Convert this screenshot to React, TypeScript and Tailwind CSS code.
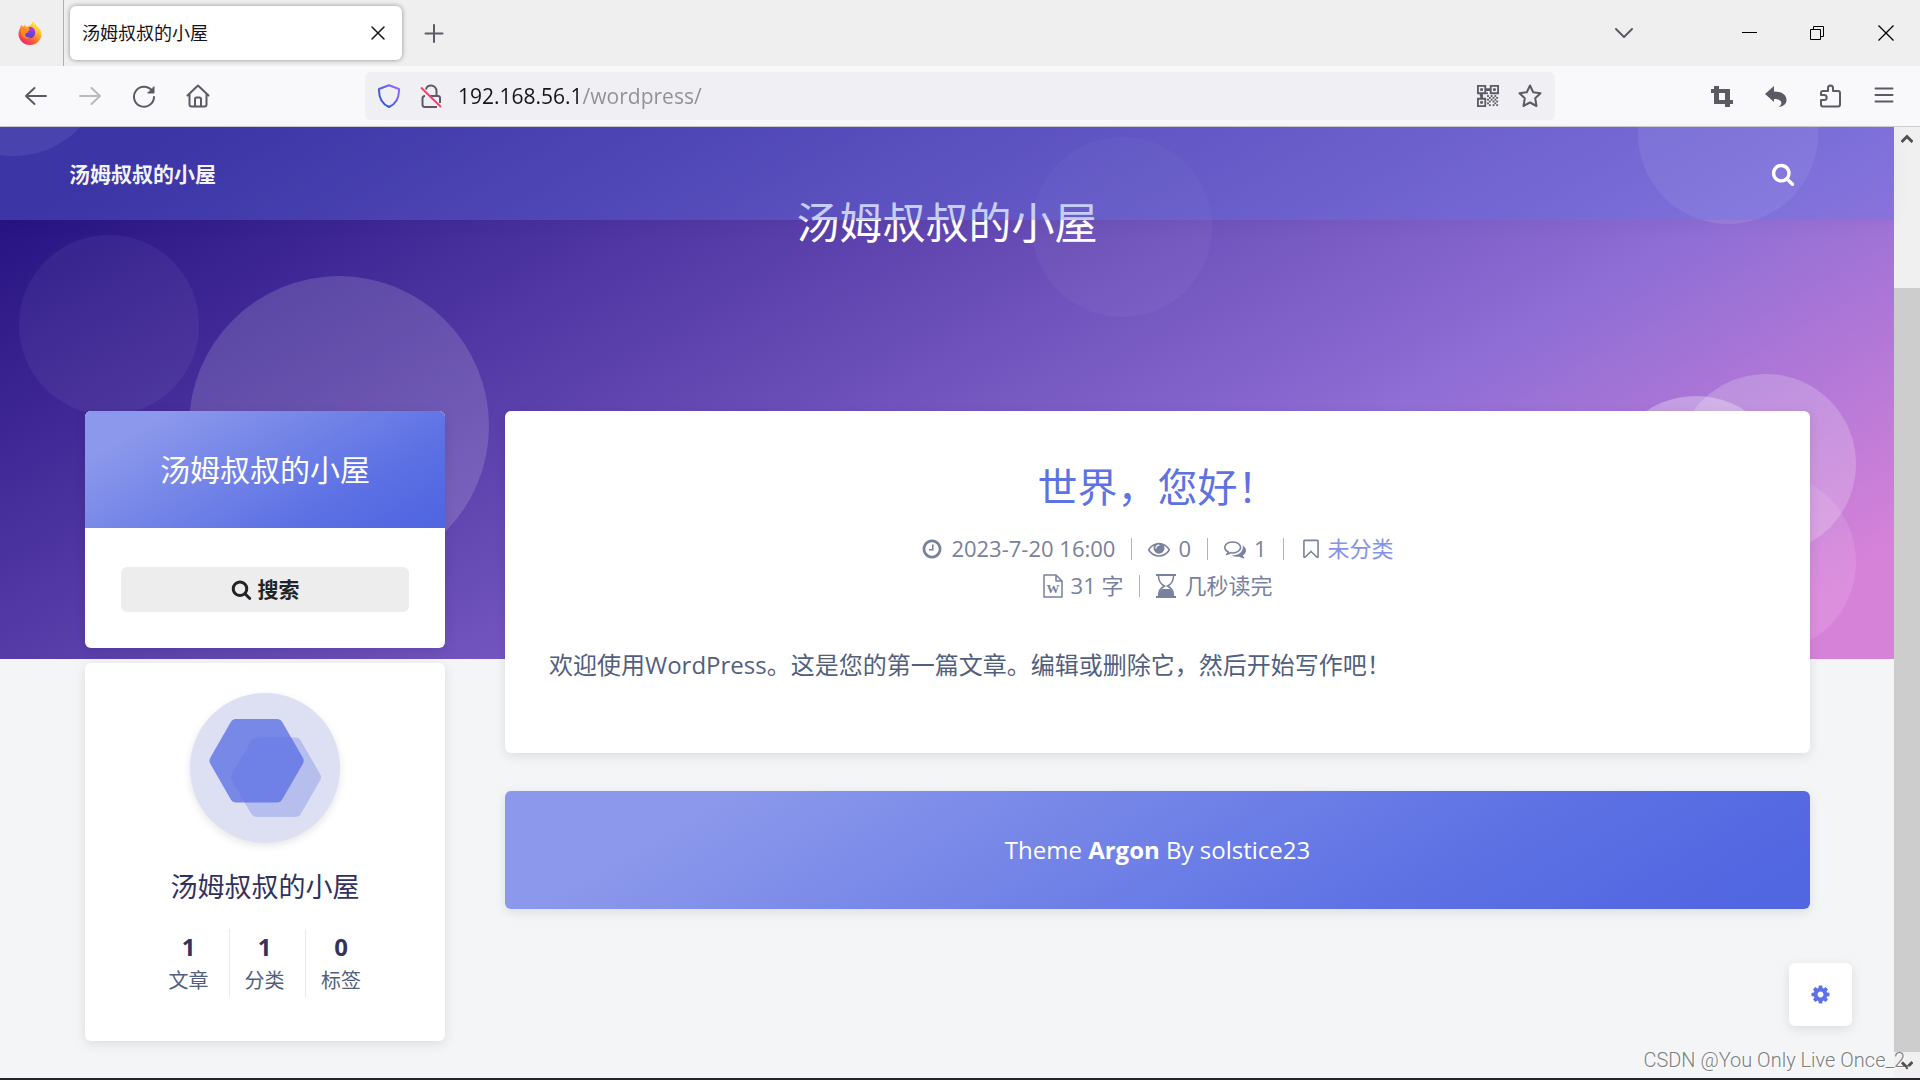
import { useState, type ReactNode } from "react";

const SITE_NAME = "汤姆叔叔的小屋";

const STATS = [
  { label: "文章", value: 1 },
  { label: "分类", value: 1 },
  { label: "标签", value: 0 },
];

// Decorative bubbles floating on the banner
const BUBBLES = [
  "left-[-4%] top-[17px] size-[180px] bg-white/10",
  "right-[4%] top-[85px] size-[180px] bg-white/10",
  "right-[5.7%] top-[437px] size-[180px] bg-white/30",
  "left-[1%] top-[276px] size-[180px] bg-white/5",
  "left-[10%] top-[317px] size-[300px] bg-white/15",
  "right-[36%] top-[178px] size-[180px] bg-white/4",
  "right-[2%] top-[415px] size-[180px] bg-white/20",
  "right-[2%] top-[513px] size-[180px] bg-white/10",
];

const ICON_PATHS = {
  clock:
    "M1024 544v448q0 14-9 23t-23 9h-320q-14 0-23-9t-9-23v-64q0-14 9-23t23-9h224v-352q0-14 9-23t23-9h64q14 0 23 9t9 23zm416 352q0-148-73-273t-198-198-273-73-273 73-198 198-73 273 73 273 198 198 273 73 273-73 198-198 73-273zm224 0q0 209-103 385.5t-279.5 279.5-385.5 103-385.5-103-279.5-279.5-103-385.5 103-385.5 279.5-279.5 385.5-103 385.5 103 279.5 279.5 103 385.5z",
  eye: "M1664 960q-152-236-381-353 61 104 61 225 0 185-131.5 316.5t-316.5 131.5-316.5-131.5-131.5-316.5q0-121 61-225-229 117-381 353 133 205 333.5 326.5t434.5 121.5 434.5-121.5 333.5-326.5zm-720-384q0-20-14-34t-34-14q-125 0-214.5 89.5t-89.5 214.5q0 20 14 34t34 14 34-14 14-34q0-86 61-147t147-61q20 0 34-14t14-34zm848 384q0 34-20 69-140 230-376.5 368.5t-499.5 138.5-499.5-139-376.5-368q-20-35-20-69t20-69q140-229 376.5-368t499.5-139 499.5 139 376.5 368q20 35 20 69z",
  comments:
    "M704 384q-153 0-286 52t-211.5 141-78.5 191q0 82 53 158t149 132l97 56-35 84q34-20 62-39l44-31 53 10q78 14 153 14 153 0 286-52t211.5-141 78.5-191-78.5-191-211.5-141-286-52zm0-128q191 0 353.5 68.5t256.5 186.5 94 257-94 257-256.5 186.5-353.5 68.5q-86 0-176-16-124 88-278 128-36 9-86 16h-3q-11 0-20.5-8t-11.5-21q-1-3-1-6.5t.5-6.5 2-6l2.5-5 3.5-5.5 4-5 4.5-5 4-4.5q5-6 23-25t26-29.5 22.5-29 25-38.5 20.5-44q-124-72-195-177t-71-224q0-139 94-257t256.5-186.5 353.5-68.5zm822 1169q10 24 20.5 44t25 38.5 22.5 29 26 29.5 23 25q1 1 4 4.5t4.5 5 4 5 3.5 5.5l2.5 5 2 6 .5 6.5-1 6.5q-3 14-13 22t-22 7q-50-7-86-16-154-40-278-128-90 16-176 16-271 0-472-132 58 4 88 4 161 0 309-45t264-129q125-92 192-212t67-254q0-77-23-152 129 71 204 178t75 230q0 120-71 224.5t-195 176.5z",
  bookmark:
    "M1408 256h-1024v1242l423-406 89-85 89 85 423 406v-1242zm12-128q23 0 44 9 33 13 52.5 41t19.5 62v1289q0 34-19.5 62t-52.5 41q-19 8-44 8-48 0-83-32l-441-424-441 424q-36 33-83 33-23 0-44-9-33-13-52.5-41t-19.5-62v-1289q0-34 19.5-62t52.5-41q21-9 44-9h1048z",
  search:
    "M1216 832q0-185-131.5-316.5t-316.5-131.5-316.5 131.5-131.5 316.5 131.5 316.5 316.5 131.5 316.5-131.5 131.5-316.5zm512 832q0 52-38 90t-90 38q-54 0-90-38l-343-342q-179 124-399 124-143 0-273.5-55.5t-225-150-150-225-55.5-273.5 55.5-273.5 150-225 225-150 273.5-55.5 273.5 55.5 225 150 150 225 55.5 273.5q0 220-124 399l343 343q37 37 37 90z",
  cog: "M1152 896q0-106-75-181t-181-75-181 75-75 181 75 181 181 75 181-75 75-181zm512-109v222q0 12-8 23t-20 13l-185 28q-19 54-39 91 35 50 107 138 10 12 10 25t-9 23q-27 37-99 108t-94 71q-12 0-26-9l-138-108q-44 23-91 38-16 136-29 186-7 28-36 28h-222q-14 0-24.5-8.5t-11.5-21.5l-28-184q-49-16-90-37l-141 107q-10 9-25 9-14 0-25-11-126-114-165-168-7-10-7-23 0-12 8-23 15-21 51-66.5t54-70.5q-27-50-41-99l-183-27q-13-2-21-12.5t-8-23.5v-222q0-12 8-23t19-13l186-28q14-46 39-92-40-57-107-138-10-12-10-24 0-10 9-23 26-36 98.5-107.5t94.5-71.5q13 0 26 10l138 107q44-23 91-38 16-136 29-186 7-28 36-28h222q14 0 24.5 8.5t11.5 21.5l28 184q49 16 90 37l142-107q9-9 24-9 13 0 25 10 129 119 165 170 7 8 7 22 0 12-8 23-15 21-51 66.5t-54 70.5q26 50 41 98l183 28q13 2 21 12.5t8 23.5z",
};

function Icon({ name, className = "size-[22px]" }: { name: keyof typeof ICON_PATHS; className?: string }) {
  return (
    <svg viewBox="0 0 1792 1792" fill="currentColor" className={`shrink-0 ${className}`} aria-hidden>
      <path d={ICON_PATHS[name]} />
    </svg>
  );
}

/** Stroke icon on a 24px grid, used by the browser toolbar. */
function Line({ children, width = 2 }: { children: ReactNode; width?: number }) {
  return (
    <svg
      viewBox="0 0 24 24"
      className="size-6 shrink-0"
      fill="none"
      stroke="currentColor"
      strokeWidth={width}
      strokeLinecap="round"
      strokeLinejoin="round"
      aria-hidden
    >
      {children}
    </svg>
  );
}

function ToolButton({ label, children, dim }: { label: string; children: ReactNode; dim?: boolean }) {
  return (
    <button
      type="button"
      aria-label={label}
      disabled={dim}
      className="flex size-12 items-center justify-center rounded text-[#5b5b66] disabled:opacity-40"
    >
      {children}
    </button>
  );
}

function FirefoxLogo() {
  return (
    <svg viewBox="0 0 24 24" className="size-6" aria-hidden>
      <defs>
        <linearGradient id="fx-body" x1="0.85" y1="0.1" x2="0.25" y2="0.95">
          <stop offset="0" stopColor="#fff14b" />
          <stop offset="0.35" stopColor="#ffb02e" />
          <stop offset="0.65" stopColor="#ff6a2f" />
          <stop offset="1" stopColor="#f0256b" />
        </linearGradient>
        <linearGradient id="fx-core" x1="0.7" y1="0" x2="0.4" y2="1">
          <stop offset="0" stopColor="#b33af0" />
          <stop offset="1" stopColor="#4a45c9" />
        </linearGradient>
      </defs>
      <path
        d="M15 0.5c1.200 2 3 3 4.600 5.200C22 7.500 23.500 10 23.500 13a11.500 11 0 0 1-23 0C0.500 10 1.500 8 2.500 6.500L3 3.800l2 1.900c1-.9 1.600-1.500 2.300-1.900L7.500 5.500c2 0 3.500-.3 5-1.200C13.300 3.200 14 1.800 15 0.500z"
        fill="url(#fx-body)"
      />
      <path d="M10.500 6.500c2.500-1.500 6.500.5 6.700 4.700.1 3.800-2.500 6-5.300 6s-4.900-2-5.100-4.600l3.200-.8c-1.200-.5-1.200-1.500-.8-2.300l2.300-.8z" fill="url(#fx-core)" />
      <path d="M3 8c2-1.300 4.500-.8 6 .5l2.700.4-2 1.800c-.9.800-2 1-2.400 2.200-1 2.600 2.200 4.300 4.700 3-1.500 2.300-5.300 2.200-7.200-.1C3.200 13.700 2.500 11 3 8z" fill="#ff8a25" />
    </svg>
  );
}

function WordFileIcon() {
  return (
    <svg viewBox="0 0 20 24" className="h-6 w-5 shrink-0" fill="none" stroke="currentColor" strokeWidth="1.500" aria-hidden>
      <path d="M1 1h12l6 6v16H1zM13 1v6h6" strokeLinejoin="round" />
      <text
        x="10"
        y="19"
        textAnchor="middle"
        fontSize="13"
        fontWeight="700"
        fontFamily="Liberation Serif, serif"
        fill="currentColor"
        stroke="none"
      >
        W
      </text>
    </svg>
  );
}

function HourglassIcon() {
  return (
    <svg viewBox="0 0 20 24" className="h-6 w-5 shrink-0" fill="currentColor" aria-hidden>
      <path d="M0 0h20v2H0zM0 22h20v2H0z" />
      <path d="M2.500 2c0 5 3 8.500 6 10-3 1.500-6 5-6 10M17.500 2c0 5-3 8.500-6 10 3 1.500 6 5 6 10" fill="none" stroke="currentColor" strokeWidth="1.500" />
      <path d="M6 15h8c2.200 1.600 3.200 4.300 3.500 7.500h-15c.3-3.200 1.300-5.900 3.500-7.500z" />
    </svg>
  );
}

function QrIcon() {
  const cells = [
    [12, 12], [16, 12], [20, 12], [14, 14], [18, 14], [22, 14], [12, 16], [16, 16], [20, 16],
    [14, 18], [18, 18], [22, 18], [12, 20], [20, 20], [14, 22], [18, 22], [22, 22], [4, 11], [11, 9],
  ];
  return (
    <svg viewBox="0 0 24 24" className="size-[22px] shrink-0" fill="none" stroke="currentColor" strokeWidth="2" aria-hidden>
      <path d="M1 1h8v8H1zM15 1h8v8h-8zM1 15h8v8H1z" />
      <path d="M4 4h2v2H4zM18 4h2v2h-2zM4 18h2v2H4z" fill="currentColor" strokeWidth="1" />
      {cells.map(([x, y]) => (
        <rect key={`${x}-${y}`} x={x - 1} y={y - 1} width="2" height="2" fill="currentColor" stroke="none" />
      ))}
      <path d="M9 5h6M5 9v6" strokeWidth="3" />
    </svg>
  );
}

function TabBar() {
  return (
    <div className="flex h-[66px] items-center bg-[#efefef]">
      <div className="flex h-full w-16 items-center justify-center border-r border-[#b0b0b0] pr-1">
        <FirefoxLogo />
      </div>
      <div className="ml-1.5 flex h-[54px] w-[332px] items-center rounded-md bg-white pr-3 pl-3 shadow-[0_0_5px_rgba(0,0,0,0.4)]">
        <span className="flex-1 text-[18px] leading-6 text-[#15141a]">{SITE_NAME}</span>
        <button type="button" aria-label="关闭标签页" className="flex size-6 items-center justify-center text-[#15141a]">
          <Line width={1.5}>
            <path d="M6 6l12 12M18 6L6 18" />
          </Line>
        </button>
      </div>
      <button type="button" aria-label="新建标签页" className="ml-2 flex size-12 items-center justify-center text-[#5b5b66]">
        <Line>
          <path d="M12 4v17M3.500 12.500h17" />
        </Line>
      </button>
      <div className="ml-auto flex items-center text-black">
        <button type="button" aria-label="列出所有标签页" className="mr-[68px] flex size-12 items-center justify-center text-[#5b5b66]">
          <Line>
            <path d="M4 8l8 8 8-8" />
          </Line>
        </button>
        <button type="button" aria-label="最小化" className="flex h-12 w-[68px] items-center justify-center">
          <svg viewBox="0 0 16 16" className="size-4" stroke="currentColor" aria-hidden>
            <path d="M0 7.500h15" />
          </svg>
        </button>
        <button type="button" aria-label="还原" className="flex h-12 w-[68px] items-center justify-center">
          <svg viewBox="0 0 16 16" className="size-4" fill="none" stroke="currentColor" aria-hidden>
            <path d="M0.500 4.500h10v10h-10zM3.500 4.500v-3h10v10h-3" />
          </svg>
        </button>
        <button type="button" aria-label="关闭" className="flex h-12 w-[68px] items-center justify-center">
          <svg viewBox="0 0 16 16" className="size-4" stroke="currentColor" strokeWidth="1.300" aria-hidden>
            <path d="M0.500 0.500l15 15M15.500 0.500l-15 15" />
          </svg>
        </button>
      </div>
    </div>
  );
}

function Toolbar() {
  const [url, setUrl] = useState("192.168.56.1/wordpress/");

  return (
    <div className="flex h-[61px] items-center border-b border-[#cccccc] bg-[#f9f9fb] px-3">
      <div className="flex gap-1.5">
        <ToolButton label="后退">
          <Line>
            <path d="M2 12h20M10.500 4L2 12l8.500 8" />
          </Line>
        </ToolButton>
        <ToolButton label="前进" dim>
          <Line>
            <path d="M2 12h20M13.500 4l8.500 8-8.500 8" />
          </Line>
        </ToolButton>
        <ToolButton label="刷新">
          <Line>
            <path d="M20.500 7.500A10 10 0 1 0 22 13" />
            <path d="M22 3v6h-6z" fill="currentColor" strokeWidth="1" />
          </Line>
        </ToolButton>
        <ToolButton label="主页">
          <Line>
            <path d="M1.500 11.500L12 1.500l10.500 10M3.500 10v10.500a2 2 0 0 0 2 2h13a2 2 0 0 0 2-2V10M9 22v-7a1.500 1.500 0 0 1 1.500-1.500h3A1.500 1.500 0 0 1 15 15v7" />
          </Line>
        </ToolButton>
      </div>
      <div className="mx-[143px] flex h-12 flex-1 items-center rounded-md bg-[#f0eff4] px-3 text-[#5b5b66]">
        <svg viewBox="0 0 24 24" className="size-6 shrink-0" fill="none" strokeWidth="2" strokeLinejoin="round" aria-hidden>
          <defs>
            <linearGradient id="shield" x1="1" y1="0" x2="0" y2="1">
              <stop offset="0" stopColor="#9a6bff" />
              <stop offset="1" stopColor="#1a55d0" />
            </linearGradient>
          </defs>
          <path d="M12 1.200l10 3.800c.3 8-2.500 14.500-10 18C4.500 19.500 1.700 13 2 5z" stroke="url(#shield)" />
        </svg>
        <svg viewBox="0 0 24 24" className="ml-[18px] size-6 shrink-0" fill="none" stroke="currentColor" strokeWidth="2" aria-hidden>
          <path d="M7 5.500C7.500 3 9.500 1.500 12 1.500A5.500 5.500 0 0 1 17.500 7v5M11 12h8a2 2 0 0 1 2 2v5M18 23H6a2.500 2.500 0 0 1-2.500-2.500v-6A2.500 2.500 0 0 1 6 12" />
          <path d="M2 3.500l20 19.500" stroke="#ff3b6b" />
        </svg>
        <input
          type="text"
          aria-label="地址栏"
          value={url}
          onChange={(e) => setUrl(e.target.value)}
          className="ml-[15px] min-w-0 flex-1 bg-[linear-gradient(90deg,#15141a_124px,#8f8f96_124px)] bg-clip-text text-[21px] leading-8 text-transparent outline-none"
        />
        <button type="button" aria-label="二维码" className="flex size-[42px] items-center justify-center">
          <QrIcon />
        </button>
        <button type="button" aria-label="收藏" className="-mr-2 flex size-[42px] items-center justify-center">
          <Line>
            <path d="M12 1.500l3.200 6.700 7.300 1-5.300 5.100 1.300 7.700L12 18.500 5.500 22l1.300-7.700L1.500 9.200l7.300-1z" />
          </Line>
        </button>
      </div>
      <div className="flex gap-1.5">
        <ToolButton label="截图">
          <svg viewBox="0 0 24 24" className="size-6" fill="currentColor" aria-hidden>
            <path d="M4 2h5v3h11v11h3v4h-3v3h-5v-3H4V9H1V5h3zM9 9v7h6V9z" fillRule="evenodd" />
          </svg>
        </ToolButton>
        <ToolButton label="撤销">
          <svg viewBox="0 0 24 24" className="size-6" fill="currentColor" aria-hidden>
            <path d="M10 2v5.500c8 0 12.500 3.500 12.500 8.500 0 4-3 6.500-8 7 4-2 5-8-4.500-8v3L1 10z" />
          </svg>
        </ToolButton>
        <ToolButton label="扩展">
          <Line>
            <path d="M10 7V4a2.500 2.500 0 0 1 5 0v3h5a2 2 0 0 1 2 2v11.500a2 2 0 0 1-2 2H5a2 2 0 0 1-2-2V16h3.200a2.500 2.500 0 0 0 0-5H3V9a2 2 0 0 1 2-2z" />
          </Line>
        </ToolButton>
        <ToolButton label="菜单">
          <Line>
            <path d="M3.500 4.500h17M3.500 11h17M3.500 17.500h17" />
          </Line>
        </ToolButton>
      </div>
    </div>
  );
}

function Separator() {
  return <span className="mx-4 h-[22px] w-px bg-[#aab4cc]" />;
}

function Sidebar() {
  return (
    <aside className="w-[360px] shrink-0">
      <div className="overflow-hidden rounded-md bg-white shadow-[0_3px_12px_rgba(0,0,0,0.1)]">
        <div className="bg-[linear-gradient(150deg,#8b98eb_15%,#5e72e4_70%,#5166e1_94%)] py-9 text-center text-[30px] leading-[45px] text-white">
          {SITE_NAME}
        </div>
        <div className="px-9 pt-[39px] pb-9">
          <button
            type="button"
            className="flex h-[45px] w-full items-center justify-center gap-1.5 rounded-md bg-[#ededed] text-[21px] font-bold text-[#212529]"
          >
            <Icon name="search" className="size-[21px]" />
            搜索
          </button>
        </div>
      </div>

      <div className="mt-[15px] flex flex-col items-center rounded-md bg-white pt-[30px] pb-11 shadow-[0_3px_12px_rgba(0,0,0,0.1)]">
        <svg viewBox="0 0 150 150" className="size-[150px] rounded-full bg-[#dde0f2] shadow-[0_3px_9px_rgba(0,0,0,0.1)]" role="img" aria-label="头像">
          <g fill="#5e72e4" stroke="#5e72e4" strokeWidth="12" strokeLinejoin="round">
            <path opacity="0.3" d="M47 84.200L66.500 50.400h39L125 84.200 105.500 118h-39z" />
            <path opacity="0.8" d="M25.500 67.700L46 32h41l20.700 35.700L87 103.400H46z" />
          </g>
        </svg>
        <h2 className="mt-6 text-[27px] leading-10 text-[#32325d]">{SITE_NAME}</h2>
        <div className="mt-[22px] flex pl-1.5 text-center">
          {STATS.map((stat) => (
            <a key={stat.label} href="#" className="w-[76px] border-r border-[#e9ecef] pr-1.5 last:border-r-0">
              <span className="block text-2xl leading-9 font-bold text-[#32325d]">{stat.value}</span>
              <span className="block text-xl leading-8 text-[#525f7f]">{stat.label}</span>
            </a>
          ))}
        </div>
      </div>
    </aside>
  );
}

function Article() {
  return (
    <article className="rounded-md bg-white px-11 pt-12 pb-[67px] text-center shadow-[0_3px_12px_rgba(0,0,0,0.1)]">
      <h1 className="text-[40px] leading-[56px]">
        <a href="#" className="text-[#5e72e4]">
          世界，您好！
        </a>
      </h1>
      <div className="mt-[15px] text-[22px] leading-[37px] text-[#78819d]">
        <div className="flex items-center justify-center">
          <Icon name="clock" />
          <time className="ml-2">2023-7-20 16:00</time>
          <Separator />
          <Icon name="eye" />
          <span className="ml-2">0</span>
          <Separator />
          <Icon name="comments" />
          <span className="ml-2">1</span>
          <Separator />
          <Icon name="bookmark" />
          <a href="#" className="ml-1.5 text-[#8492eb]">
            未分类
          </a>
        </div>
        <div className="flex items-center justify-center">
          <WordFileIcon />
          <span className="ml-2">31 字</span>
          <Separator />
          <HourglassIcon />
          <span className="ml-2">几秒读完</span>
        </div>
      </div>
      <p className="mt-[39px] text-left text-2xl leading-[43px] text-[#525f7f]">
        欢迎使用WordPress。这是您的第一篇文章。编辑或删除它，然后开始写作吧！
      </p>
    </article>
  );
}

function Scrollbar() {
  return (
    <div className="flex w-[26px] shrink-0 flex-col bg-[#f0f0f0] text-[#505050]">
      <button type="button" aria-label="向上滚动" className="flex h-[26px] items-center justify-center">
        <svg viewBox="0 0 12 12" className="size-3" fill="none" stroke="currentColor" strokeWidth="3" aria-hidden>
          <path d="M0.500 8L6 2.500 11.500 8" />
        </svg>
      </button>
      <div className="mt-[135px] flex-1 bg-[#cdcdcd]" />
      <button type="button" aria-label="向下滚动" className="flex h-[26px] items-center justify-center">
        <svg viewBox="0 0 12 12" className="size-3" fill="none" stroke="currentColor" strokeWidth="3" aria-hidden>
          <path d="M0.500 3L6 8.500 11.500 3" />
        </svg>
      </button>
    </div>
  );
}

export default function App() {
  return (
    <div
      lang="zh-CN"
      className="relative flex min-h-screen flex-col bg-[#f4f5f7] font-['Open_Sans','Noto_Sans_CJK_SC',sans-serif]"
    >
      <TabBar />
      <Toolbar />

      <div className="flex flex-1">
        <div className="min-w-0 flex-1">
          <header className="relative z-10 flex h-[93px] items-center justify-between bg-[#5e72e4]/35 pr-[99px] pl-[69px] shadow-[0_3px_18px_rgba(0,0,0,0.04)]">
            <a href="#" className="text-[21px] leading-8 font-bold text-white/95">
              {SITE_NAME}
            </a>
            <button type="button" aria-label="搜索" className="text-white">
              <Icon name="search" className="size-6" />
            </button>
          </header>

          <section className="relative -mt-[93px] h-[532px] overflow-hidden pt-16">
            <div className="absolute inset-x-0 bottom-0 h-[700px] bg-[linear-gradient(150deg,#281483_15%,#8f6ed5_70%,#d782d9_94%)]">
              {BUBBLES.map((bubble) => (
                <span key={bubble} className={`absolute rounded-full ${bubble}`} />
              ))}
            </div>
            <div className="relative text-center text-[43px] leading-[64px] text-white">{SITE_NAME}</div>
          </section>

          <main className="relative -mt-[248px] flex items-start gap-[60px] pr-[84px] pb-9 pl-[85px]">
            <Sidebar />
            <div className="min-w-0 flex-1">
              <Article />
              <footer className="mt-[38px] rounded-md bg-[linear-gradient(150deg,#8b98eb_15%,#5e72e4_70%,#5166e1_94%)] py-10 text-center text-2xl leading-[38px] text-white shadow-[0_3px_12px_rgba(0,0,0,0.1)]">
                Theme{" "}
                <a href="#" className="font-bold">
                  Argon
                </a>{" "}
                By solstice23
              </footer>
            </div>
          </main>
        </div>
        <Scrollbar />
      </div>
      <div className="h-0.5 bg-[#26232b]" />

      <button
        type="button"
        aria-label="设置"
        className="absolute right-[68px] bottom-[54px] flex size-[63px] items-center justify-center rounded-md bg-white text-[#5e72e4] shadow-[0_3px_12px_rgba(0,0,0,0.1)]"
      >
        <Icon name="cog" className="size-[21px]" />
      </button>
      <div className="absolute right-2.5 bottom-2 font-['Roboto',sans-serif] text-[20px] leading-6 font-light text-[#7d7d7d] [text-shadow:1px_1px_0_#ffffff]">
        CSDN @You Only Live Once_2.
      </div>
    </div>
  );
}
